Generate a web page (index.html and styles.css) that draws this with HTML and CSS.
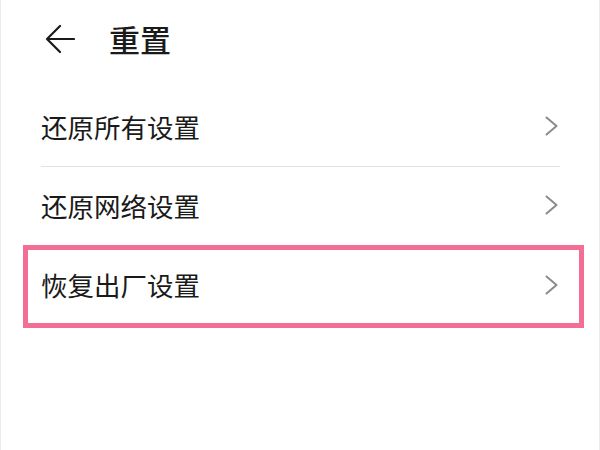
FILE: index.html
```html
<!DOCTYPE html>
<html lang="zh-CN">
<head>
  <meta charset="UTF-8" />
  <meta name="viewport" content="width=device-width, initial-scale=1.0"/>
  <title>重置</title>
  <link rel="stylesheet" href="styles.css">
</head>
<body>

  <header class="topbar">
    <a href="#" class="back">
      <svg viewBox="0 0 30 30" width="30" height="30">
        <path d="M29 15H2M15 2L2 15l13 13" fill="none" stroke="#1a1a1a" stroke-width="2.2" stroke-linecap="round" stroke-linejoin="round"/>
      </svg>
    </a>
    <h1>重置</h1>
  </header>

  <ul class="menu">
    <li class="item">
      <span>还原所有设置</span>
      <svg class="chev" viewBox="0 0 13 20" width="13" height="20"><path d="M1.5 1.5l10 8.5-10 8.5" /></svg>
    </li>
    <li class="item">
      <span>还原网络设置</span>
      <svg class="chev" viewBox="0 0 13 20" width="13" height="20"><path d="M1.5 1.5l10 8.5-10 8.5" /></svg>
    </li>
    <li class="item marked">
      <span>恢复出厂设置</span>
      <svg class="chev" viewBox="0 0 13 20" width="13" height="20"><path d="M1.5 1.5l10 8.5-10 8.5" /></svg>
    </li>
  </ul>

</body>
</html>
```

FILE: styles.css
```css
* { box-sizing: border-box; margin: 0; padding: 0; }
body {
  font-family: "Noto Sans CJK SC", "Noto Sans", sans-serif;
  background: #fff;
  color: #1a1a1a;
  width: 600px;
  height: 450px;
  border-left: 1px solid #ececec;
  border-right: 1px solid #ececec;
}

.topbar {
  height: 78px;
  display: flex;
  align-items: center;
  padding-left: 44px;
}
.back { display: flex; width: 30px; height: 30px; }
.topbar h1 {
  font-size: 31px;
  font-weight: 500;
  margin-left: 34px;
  margin-top: -1px;
}

.menu { list-style: none; padding: 10px 39px 0 40px; }
.item {
  position: relative;
  height: 79px;
  display: flex;
  align-items: center;
  justify-content: space-between;
  font-size: 26.5px;
  border-bottom: 1px solid #e3e3e3;
}
.item:last-child { border-bottom: none; }
.item span { margin-top: -2px; }

.chev { margin-right: 2px; margin-top: -2px; }
.chev path {
  fill: none;
  stroke: #8a8a8a;
  stroke-width: 2;
  stroke-linecap: round;
  stroke-linejoin: round;
}

/* highlight frame around the factory reset row */
.marked::after {
  content: "";
  position: absolute;
  left: -18px;
  right: -24px;
  top: -1px;
  bottom: -3px;
  border: 5px solid #f26e94;
}
```
